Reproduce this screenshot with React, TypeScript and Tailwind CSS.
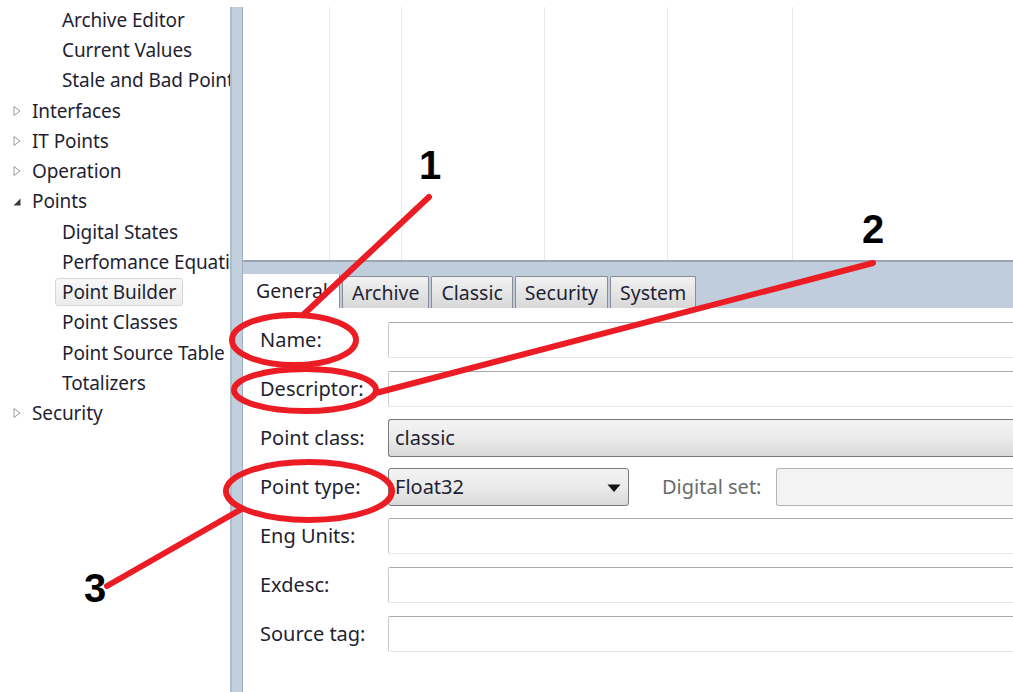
import type { ReactNode } from "react";

type TreeNode = { label: string; depth: 0 | 1; expander?: "closed" | "open"; selected?: boolean };

const tree: TreeNode[] = [
  { label: "Archive Editor", depth: 1 },
  { label: "Current Values", depth: 1 },
  { label: "Stale and Bad Points", depth: 1 },
  { label: "Interfaces", depth: 0, expander: "closed" },
  { label: "IT Points", depth: 0, expander: "closed" },
  { label: "Operation", depth: 0, expander: "closed" },
  { label: "Points", depth: 0, expander: "open" },
  { label: "Digital States", depth: 1 },
  { label: "Perfomance Equations", depth: 1 },
  { label: "Point Builder", depth: 1, selected: true },
  { label: "Point Classes", depth: 1 },
  { label: "Point Source Table", depth: 1 },
  { label: "Totalizers", depth: 1 },
  { label: "Security", depth: 0, expander: "closed" },
];

const tabs = ["General", "Archive", "Classic", "Security", "System"];

// widths of the empty list columns above the tab control
const columns = [87, 72, 143, 123, 125];

function Expander({ kind }: { kind: "closed" | "open" }) {
  if (kind === "open") {
    return (
      <svg width="10" height="10" viewBox="0 0 10 10" className="shrink-0">
        <path d="M8.5 1.5 L8.5 8.5 L1.5 8.5 Z" fill="#3c3c3c" />
      </svg>
    );
  }
  return (
    <svg width="10" height="12" viewBox="0 0 10 12" className="shrink-0">
      <path d="M2 1.5 L8 6 L2 10.5 Z" fill="none" stroke="#9a9a9a" strokeWidth="1" />
    </svg>
  );
}

function TreeRow({ node }: { node: TreeNode }) {
  return (
    <div className="flex h-[30.25px] items-center whitespace-nowrap">
      {node.depth === 0 ? (
        <div className="flex items-center">
          <span className="flex w-[32px] justify-start pl-[12px]">
            <Expander kind={node.expander ?? "closed"} />
          </span>
          <span>{node.label}</span>
        </div>
      ) : (
        <div
          className={
            node.selected
              ? "ml-[55px] rounded-[3px] border border-[#d6d6d6] bg-gradient-to-b from-[#f8f8f8] to-[#ececec] pl-[6px] pr-[6px] leading-[26px]"
              : "ml-[62px]"
          }
        >
          {node.label}
        </div>
      )}
    </div>
  );
}

function Field({ label, children }: { label: string; children?: ReactNode }) {
  return (
    <div className="flex h-[49px] items-center">
      <div className="w-[145px] shrink-0 whitespace-nowrap pl-[17px]">{label}</div>
      {children ?? <TextBox />}
    </div>
  );
}

function TextBox() {
  return (
    <div className="h-[36px] flex-1 rounded-l-[2px] border border-r-0 border-[#c9ccd1] border-t-[#a7abb0] border-b-[#e3e8ee] bg-white" />
  );
}

function ComboBox({ value, className }: { value: string; className: string }) {
  return (
    <div
      className={`flex h-[38px] items-center rounded-[3px] border border-[#7a7a7a] bg-gradient-to-b from-[#f3f3f3] via-[#ebebeb] to-[#d9d9d9] pl-[6px] ${className}`}
    >
      {value}
    </div>
  );
}

export default function App() {
  return (
    <div className="relative flex h-[692px] w-[1013px] overflow-hidden bg-white font-['Noto_Sans',sans-serif] text-[#1f1f33]">
      {/* navigation tree */}
      <aside className="w-[230px] shrink-0 overflow-hidden pt-[5px] text-[19px] tracking-[-0.1px]">
        {tree.map((n) => (
          <TreeRow key={n.label} node={n} />
        ))}
      </aside>

      {/* splitter */}
      <div className="mt-[7px] w-[13px] shrink-0 border-l-[2px] border-r border-l-[#aebdcc] border-r-[#9fb0c2] bg-[#c2cfdd]" />

      <main className="flex min-w-0 flex-1 flex-col text-[20px]">
        {/* empty list view */}
        <div className="mt-[7px] flex h-[253px]">
          {columns.map((w, i) => (
            <div key={i} style={{ width: w }} className="shrink-0 border-r border-[#e6eaef]" />
          ))}
          <div className="flex-1" />
        </div>

        {/* tab strip */}
        <div className="flex h-[48px] items-end gap-[2px] border-t-[2px] border-[#9ba6b2] bg-[#bfcddc] text-[19.5px]">
          {tabs.map((t, i) =>
            i === 0 ? (
              <div
                key={t}
                className="flex h-[34px] w-[97px] items-start overflow-hidden whitespace-nowrap border-r border-[#8e8f8f] bg-white pl-[13px] pt-[2px]"
              >
                {t}
              </div>
            ) : (
              <div
                key={t}
                className="flex h-[32px] items-center rounded-t-[2px] border border-b-0 border-[#898c95] bg-gradient-to-b from-[#f2f2f2] to-[#d8d8d8] px-[9px]"
              >
                {t}
              </div>
            ),
          )}
        </div>

        {/* general tab form */}
        <div className="flex flex-1 flex-col pt-[7px]">
          <Field label="Name:" />
          <Field label="Descriptor:" />
          <Field label="Point class:">
            <ComboBox value="classic" className="flex-1 rounded-r-none border-r-0" />
          </Field>
          <Field label="Point type:">
            <div className="flex flex-1 items-center">
              <ComboBox value="Float32" className="w-[241px] justify-between pr-[9px]" />
              <span className="ml-[33px] w-[114px] whitespace-nowrap text-[#6b6b6b]">Digital set:</span>
              <div className="h-[38px] flex-1 rounded-l-[3px] border border-r-0 border-[#b0b5ba] bg-[#f3f3f3]" />
            </div>
          </Field>
          <Field label="Eng Units:" />
          <Field label="Exdesc:" />
          <Field label="Source tag:" />
        </div>
      </main>

      {/* dropdown arrow on the point type combo */}
      <svg className="pointer-events-none absolute left-[607px] top-[484px]" width="14" height="9" viewBox="0 0 14 9">
        <path d="M0.5 0.5 L13.5 0.5 L7 8 Z" fill="#111" />
      </svg>

      {/* red callouts */}
      <svg className="pointer-events-none absolute inset-0" width="1013" height="692" viewBox="0 0 1013 692">
        <g fill="none" stroke="#ec1c24" strokeWidth="6" strokeLinecap="round">
          <line x1="429" y1="197" x2="303" y2="315" />
          <ellipse cx="294" cy="340" rx="62" ry="25" />
          <line x1="873" y1="263" x2="376" y2="393" />
          <ellipse cx="305" cy="390" rx="71" ry="21" />
          <ellipse cx="309" cy="491" rx="83" ry="29" />
          <line x1="240" y1="510" x2="107" y2="586" />
        </g>
      </svg>
      <span className="absolute left-[419px] top-[145px] font-['Liberation_Sans',sans-serif] text-[40px] font-bold leading-none text-black">
        1
      </span>
      <span className="absolute left-[862px] top-[209px] font-['Liberation_Sans',sans-serif] text-[40px] font-bold leading-none text-black">
        2
      </span>
      <span className="absolute left-[84px] top-[568px] font-['Liberation_Sans',sans-serif] text-[40px] font-bold leading-none text-black">
        3
      </span>
    </div>
  );
}
